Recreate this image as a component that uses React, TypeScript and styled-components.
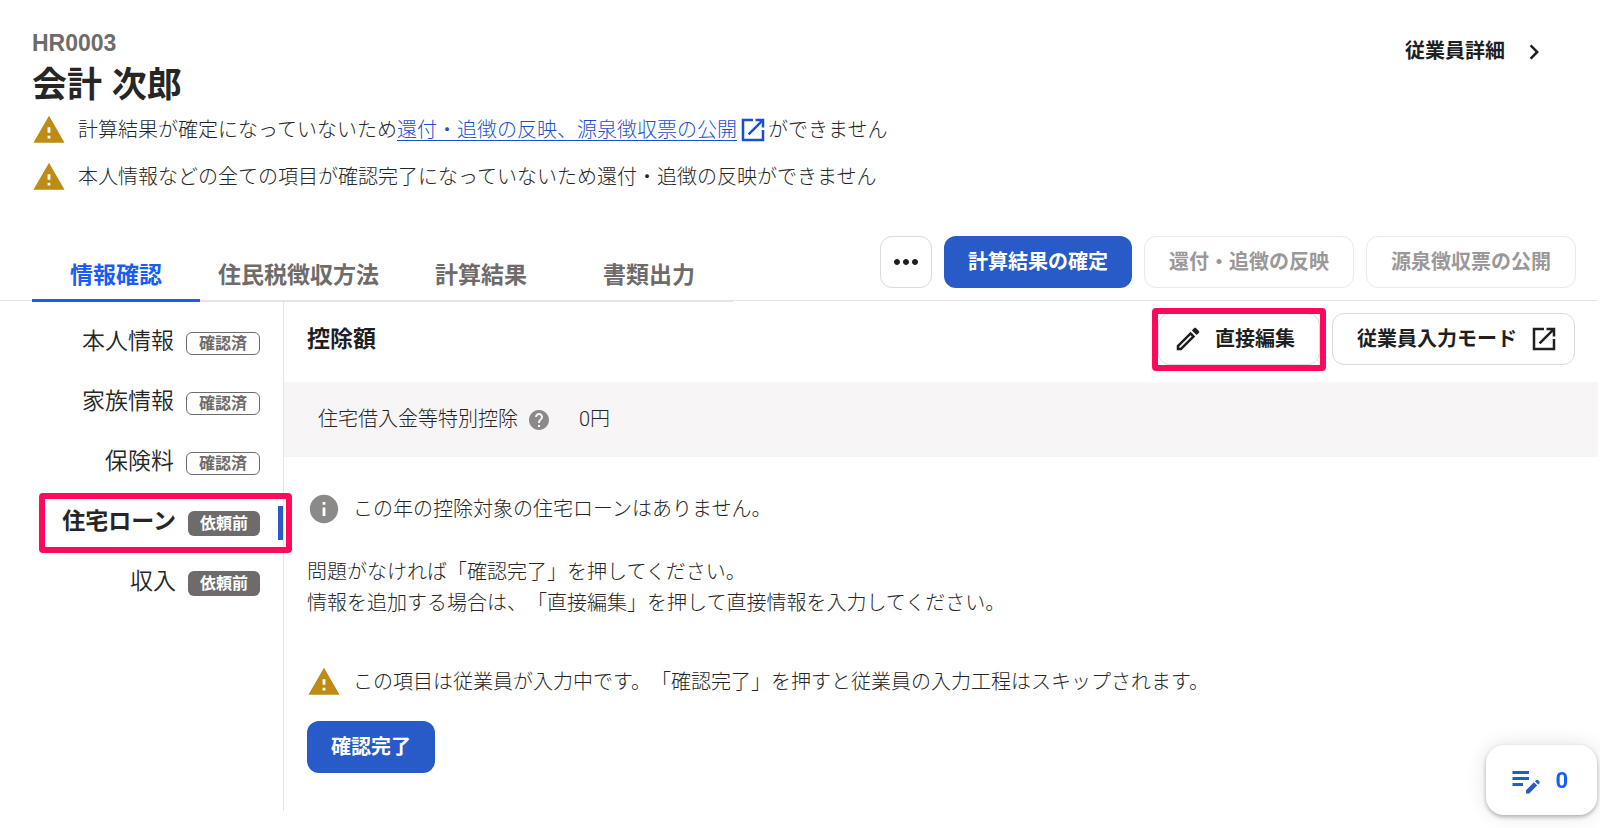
import React from "react";
import styled, { createGlobalStyle, css } from "styled-components";

const color = {
  text: "#262626",
  strong: "#1f1f1f",
  muted: "#6e6b6a",
  disabled: "#9b9898",
  line: "#e6e4e3",
  band: "#f7f5f5",
  primary: "#285ac8",
  accent: "#1a5cf5",
  link: "#1a4fd0",
  warning: "#be8c14",
  info: "#8c8a88",
  marker: "#ff0a5a",
};

const GlobalStyle = createGlobalStyle`
  *, *::before, *::after { box-sizing: border-box; }
  body {
    margin: 0;
    background: #fff;
    color: ${color.text};
    font-family: "Liberation Sans", "Noto Sans CJK JP", sans-serif;
    font-size: 20px;
    font-weight: 300;
    line-height: 31px;
    text-spacing-trim: space-all;
  }
  button { font: inherit; color: inherit; cursor: pointer; }
  button:disabled { cursor: default; }
  h1, h2, p, ul, dl, dd { margin: 0; padding: 0; }
  svg { display: block; flex: none; }
`;

const Page = styled.div`
  min-height: 100vh;
  padding-right: 2px;
`;

const Header = styled.header`
  display: flex;
  justify-content: space-between;
  align-items: flex-start;
  padding: 29px 49px 0 32px;
`;

const EmployeeCode = styled.p`
  font-size: 23px;
  font-weight: 700;
  line-height: 28px;
  color: ${color.muted};
`;

const EmployeeName = styled.h1`
  font-size: 35px;
  font-weight: 700;
  line-height: 56px;
`;

const DetailLink = styled.a`
  display: flex;
  align-items: center;
  gap: 14px;
  padding-top: 7px;
  font-weight: 700;
  color: ${color.strong};
  text-decoration: none;
`;

const Notices = styled.ul`
  display: grid;
  gap: 13px;
  list-style: none;
`;

const Notice = styled.div`
  display: flex;
  align-items: center;
  gap: 12px;
`;

const NoticeText = styled.p`
  display: flex;
  align-items: center;
  flex-wrap: wrap;
`;

const TextLink = styled.a`
  display: inline-flex;
  align-items: center;
  gap: 1px;
  color: ${color.link};
  text-decoration: none;
`;

const LinkLabel = styled.span`
  text-decoration: underline;
  text-decoration-thickness: 1px;
  text-underline-offset: 3px;
`;

const TabBar = styled.div`
  display: flex;
  justify-content: space-between;
  align-items: flex-end;
  margin-top: 42px;
  padding: 0 22px 0 32px;
  border-bottom: 1px solid ${color.line};
`;

const TabList = styled.nav`
  display: flex;
  margin-bottom: -2px;
  border-bottom: 2px solid ${color.line};
`;

const Tab = styled.button<{ $active?: boolean }>`
  min-width: 168px;
  height: 51px;
  margin-bottom: -2px;
  padding: 0 18px;
  border: 0;
  border-bottom: 3px solid ${(p) => (p.$active ? color.accent : "transparent")};
  background: none;
  font-size: 23px;
  font-weight: 700;
  color: ${(p) => (p.$active ? color.accent : color.muted)};
`;

const Actions = styled.div`
  display: flex;
  gap: 12px;
`;

const TabActions = styled(Actions)`
  padding-bottom: 12px;
`;

const Button = styled.button<{ $kind?: "primary" | "icon" }>`
  display: flex;
  align-items: center;
  justify-content: center;
  gap: 12px;
  height: 52px;
  padding: 0 24px;
  border: 1px solid #dcdada;
  border-radius: 12px;
  background: #fff;
  font-weight: 700;
  color: ${color.strong};
  &:disabled {
    border-color: #ebe9e9;
    color: ${color.disabled};
  }
  ${(p) =>
    p.$kind === "primary" &&
    css`
      border: 0;
      background: ${color.primary};
      color: #fff;
    `}
  ${(p) =>
    p.$kind === "icon" &&
    css`
      width: 52px;
      padding: 0;
    `}
`;

const LeadingIconButton = styled(Button)`
  padding-left: 14px;
`;

const TrailingIconButton = styled(Button)`
  padding-right: 15px;
`;

const marker = css`
  position: absolute;
  border: 6px solid ${color.marker};
  border-radius: 4px;
  pointer-events: none;
  content: "";
`;

const ButtonMarker = styled.div`
  position: relative;
  &::after {
    ${marker}
    inset: -5px -6px -6px -6px;
  }
`;

const Body = styled.div`
  display: grid;
  grid-template-columns: 284px 1fr;
  min-height: 510px;
`;

const SideNav = styled.ul`
  padding: 12px 0 0;
  border-right: 1px solid ${color.line};
  list-style: none;
`;

const SideItem = styled.li<{ $current?: boolean }>`
  position: relative;
  ${(p) =>
    p.$current &&
    css`
      &::before {
        position: absolute;
        top: 13px;
        right: 0;
        width: 5px;
        height: 34px;
        background: ${color.primary};
        content: "";
      }
      &::after {
        ${marker}
        inset: 0 -9px 0 39px;
      }
    `}
`;

const SideLink = styled.a<{ $current?: boolean }>`
  display: flex;
  align-items: center;
  justify-content: flex-end;
  gap: 12px;
  height: 60px;
  padding-right: 23px;
  font-size: 23px;
  font-weight: ${(p) => (p.$current ? 700 : 350)};
  color: ${color.text};
  text-decoration: none;
`;

const SideLabel = styled.span`
  padding-bottom: 4px;
`;

const Badge = styled.span<{ $filled?: boolean }>`
  padding: 0 12px;
  border-radius: 6px;
  font-size: 16px;
  font-weight: 700;
  ${(p) =>
    p.$filled
      ? css`
          background: ${color.muted};
          line-height: 25px;
          color: #fff;
        `
      : css`
          border: 1px solid ${color.muted};
          line-height: 21px;
          color: ${color.muted};
        `}
`;

const SectionHead = styled.div`
  display: flex;
  align-items: flex-start;
  justify-content: space-between;
  padding: 12px 23px 17px;
`;

const SectionTitle = styled.h2`
  font-size: 23px;
  font-weight: 700;
  line-height: 52px;
  color: ${color.strong};
`;

const Summary = styled.dl`
  display: flex;
  align-items: center;
  gap: 28px;
  height: 75px;
  padding: 0 34px;
  background: ${color.band};
`;

const SummaryTerm = styled.dt`
  display: flex;
  align-items: center;
  gap: 9px;
`;

const SummaryValue = styled.dd`
  font-family: Roboto, "Noto Sans CJK JP", sans-serif;
`;

const Details = styled.div`
  display: flex;
  flex-direction: column;
  align-items: flex-start;
  gap: 31px;
  padding: 35px 23px;
`;

const Confirm = styled.div`
  display: grid;
  justify-items: start;
  gap: 22px;
  padding-top: 15px;
`;

const MemoButton = styled.button`
  position: fixed;
  right: 3px;
  bottom: 13px;
  display: flex;
  align-items: center;
  gap: 11px;
  height: 70px;
  padding: 0 29px 0 22px;
  border: 0;
  border-radius: 18px;
  background: #fff;
  box-shadow: 0 2px 4px rgba(0, 0, 0, 0.28), 0 0 20px rgba(0, 0, 0, 0.12);
  font-family: Roboto, sans-serif;
  font-size: 22px;
  font-weight: 700;
  color: ${color.accent};
`;

const shapes = {
  warning: "M1 21h22L12 2 1 21zm12-3h-2v-2h2v2zm0-4h-2v-4h2v4z",
  info: "M12 2C6.48 2 2 6.48 2 12s4.48 10 10 10 10-4.48 10-10S17.52 2 12 2zm1 15h-2v-6h2v6zm0-8h-2V7h2v2z",
  help: "M12 2C6.48 2 2 6.48 2 12s4.48 10 10 10 10-4.48 10-10S17.52 2 12 2zm1 17h-2v-2h2v2zm2.07-7.75-.9.92C13.45 12.9 13 13.5 13 15h-2v-.5c0-1.1.45-2.1 1.17-2.83l1.24-1.26c.37-.36.59-.86.59-1.41 0-1.1-.9-2-2-2s-2 .9-2 2H8c0-2.21 1.79-4 4-4s4 1.79 4 4c0 .88-.36 1.68-.93 2.25z",
  external:
    "M19 19H5V5h7V3H3v18h18v-9h-2v7zM14 3v2h3.59l-9.83 9.83 1.41 1.41L19 6.41V10h2V3h-7z",
  chevron: "M10 6 8.59 7.41 13.17 12l-4.58 4.59L10 18l6-6z",
  pencil:
    "m14.06 9.02.92.92L5.92 19H5v-.92l9.06-9.06M17.66 3c-.25 0-.51.1-.7.29l-1.83 1.83 3.75 3.75 1.83-1.83a.996.996 0 0 0 0-1.41l-2.34-2.34c-.2-.2-.45-.29-.71-.29zm-3.6 3.19L3 17.25V21h3.75L17.81 9.94l-3.75-3.75z",
  more: "M6 10c-1.1 0-2 .9-2 2s.9 2 2 2 2-.9 2-2-.9-2-2-2zm12 0c-1.1 0-2 .9-2 2s.9 2 2 2 2-.9 2-2-.9-2-2-2zm-6 0c-1.1 0-2 .9-2 2s.9 2 2 2 2-.9 2-2-.9-2-2-2z",
  memo: "M3 10h11v2H3v-2zm0-2h11V6H3v2zm0 8h7v-2H3v2zm15.01-3.13.71-.71a.996.996 0 0 1 1.41 0l.71.71c.39.39.39 1.02 0 1.41l-.71.71-2.12-2.12zm-.71.71-5.3 5.3V21h2.12l5.3-5.3-2.12-2.12z",
};

function Icon({ name, size = 30, fill = "currentColor" }: { name: keyof typeof shapes; size?: number; fill?: string }) {
  return (
    <svg width={size} height={size} viewBox="0 0 24 24" fill={fill} aria-hidden="true">
      <path d={shapes[name]} />
    </svg>
  );
}

const tabs = ["情報確認", "住民税徴収方法", "計算結果", "書類出力"];

const sections = [
  { label: "本人情報", status: "確認済" },
  { label: "家族情報", status: "確認済" },
  { label: "保険料", status: "確認済" },
  { label: "住宅ローン", status: "依頼前" },
  { label: "収入", status: "依頼前" },
];

export default function App() {
  return (
    <Page>
      <GlobalStyle />
      <Header>
        <div>
          <EmployeeCode>HR0003</EmployeeCode>
          <EmployeeName>会計 次郎</EmployeeName>
          <Notices>
            <Notice as="li">
              <Icon name="warning" size={34} fill={color.warning} />
              <NoticeText>
                計算結果が確定になっていないため
                <TextLink href="#release">
                  <LinkLabel>還付・追徴の反映、源泉徴収票の公開</LinkLabel>
                  <Icon name="external" />
                </TextLink>
                ができません
              </NoticeText>
            </Notice>
            <Notice as="li">
              <Icon name="warning" size={34} fill={color.warning} />
              <p>本人情報などの全ての項目が確認完了になっていないため還付・追徴の反映ができません</p>
            </Notice>
          </Notices>
        </div>
        <DetailLink href="#employee">
          従業員詳細
          <Icon name="chevron" />
        </DetailLink>
      </Header>

      <TabBar>
        <TabList>
          {tabs.map((tab, i) => (
            <Tab key={tab} type="button" $active={i === 0}>
              {tab}
            </Tab>
          ))}
        </TabList>
        <TabActions>
          <Button type="button" $kind="icon" aria-label="その他">
            <Icon name="more" size={36} />
          </Button>
          <Button type="button" $kind="primary">計算結果の確定</Button>
          <Button type="button" disabled>還付・追徴の反映</Button>
          <Button type="button" disabled>源泉徴収票の公開</Button>
        </TabActions>
      </TabBar>

      <Body>
        <SideNav>
          {sections.map(({ label, status }) => {
            const current = label === "住宅ローン";
            return (
              <SideItem key={label} $current={current}>
                <SideLink href="#section" $current={current} aria-current={current ? "page" : undefined}>
                  <SideLabel>{label}</SideLabel>
                  <Badge $filled={status === "依頼前"}>{status}</Badge>
                </SideLink>
              </SideItem>
            );
          })}
        </SideNav>

        <main>
          <SectionHead>
            <SectionTitle>控除額</SectionTitle>
            <Actions>
              <ButtonMarker>
                <LeadingIconButton type="button">
                  <Icon name="pencil" />
                  直接編集
                </LeadingIconButton>
              </ButtonMarker>
              <TrailingIconButton type="button">
                従業員入力モード
                <Icon name="external" />
              </TrailingIconButton>
            </Actions>
          </SectionHead>
          <Summary>
            <SummaryTerm>
              住宅借入金等特別控除
              <Icon name="help" size={24} fill={color.info} />
            </SummaryTerm>
            <SummaryValue>0円</SummaryValue>
          </Summary>
          <Details>
            <Notice>
              <Icon name="info" size={34} fill={color.info} />
              <p>この年の控除対象の住宅ローンはありません。</p>
            </Notice>
            <p>
              問題がなければ「確認完了」を押してください。
              <br />
              情報を追加する場合は、「直接編集」を押して直接情報を入力してください。
            </p>
            <Confirm>
              <Notice>
                <Icon name="warning" size={34} fill={color.warning} />
                <p>この項目は従業員が入力中です。「確認完了」を押すと従業員の入力工程はスキップされます。</p>
              </Notice>
              <Button type="button" $kind="primary">確認完了</Button>
            </Confirm>
          </Details>
        </main>
      </Body>

      <MemoButton type="button" aria-label="メモ 0">
        <Icon name="memo" size={36} fill={color.primary} />
        0
      </MemoButton>
    </Page>
  );
}
